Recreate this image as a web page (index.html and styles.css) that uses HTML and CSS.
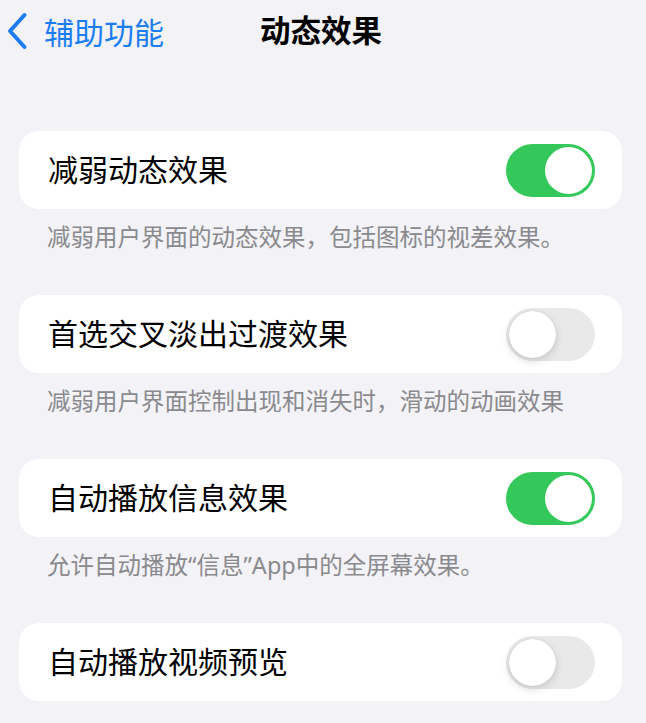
FILE: index.html
```html
<!DOCTYPE html>
<html lang="zh-CN">
<head>
<meta charset="utf-8">
<title>动态效果</title>
<link rel="stylesheet" href="styles.css">
</head>
<body>
  <header class="nav">
    <a class="nav-back" href="#">
      <svg class="chevron" width="22" height="38" viewBox="0 0 22 38" aria-hidden="true">
        <path d="M18.5 3 L4 19 L18.5 35" fill="none" stroke="#1c7cf4" stroke-width="4" stroke-linecap="round" stroke-linejoin="round"/>
      </svg>
      <span>辅助功能</span>
    </a>
    <h1 class="nav-title">动态效果</h1>
  </header>

  <main class="list">
    <section class="group">
      <div class="cell">
        <span class="cell-label">减弱动态效果</span>
        <span class="switch on"><span class="knob"></span></span>
      </div>
      <p class="footer">减弱用户界面的动态效果，包括图标的视差效果。</p>
    </section>

    <section class="group">
      <div class="cell">
        <span class="cell-label">首选交叉淡出过渡效果</span>
        <span class="switch"><span class="knob"></span></span>
      </div>
      <p class="footer">减弱用户界面控制出现和消失时，滑动的动画效果</p>
    </section>

    <section class="group">
      <div class="cell">
        <span class="cell-label">自动播放信息效果</span>
        <span class="switch on"><span class="knob"></span></span>
      </div>
      <p class="footer">允许自动播放“信息”App中的全屏幕效果。</p>
    </section>

    <section class="group">
      <div class="cell">
        <span class="cell-label">自动播放视频预览</span>
        <span class="switch"><span class="knob"></span></span>
      </div>
    </section>
  </main>
</body>
</html>
```

FILE: styles.css
```css
* {
  box-sizing: border-box;
}

html, body {
  margin: 0;
  padding: 0;
}

body {
  background: #f2f2f7;
  font-family: "Noto Sans", "Noto Sans CJK SC", sans-serif;
  color: #000;
  width: 646px;
  height: 723px;
  overflow: hidden;
}

/* navigation bar */
.nav {
  position: relative;
  height: 61px;
  display: flex;
  align-items: center;
  justify-content: center;
  padding-right: 4px;
}

.nav-back {
  position: absolute;
  left: 6px;
  top: 0;
  height: 61px;
  display: flex;
  align-items: center;
  gap: 16px;
  color: #1c7cf4;
  text-decoration: none;
  font-size: 30px;
}

.chevron {
  display: block;
}

.nav-title {
  margin: 0;
  font-size: 30.5px;
  font-weight: 700;
  line-height: 1;
}

/* grouped list */
.list {
  padding-top: 70px;
}

.group {
  margin: 0 24px 0 19px;
}

.cell {
  height: 78px;
  background: #fff;
  border-radius: 20px;
  display: flex;
  align-items: center;
  justify-content: space-between;
  padding: 0 27px 0 29px;
}

.cell-label {
  font-size: 30px;
  line-height: 1;
}

.footer {
  margin: 0;
  height: 86px;
  padding: 13px 20px 0 28px;
  font-size: 23.5px;
  line-height: 30px;
  color: #8a8a8e;
  white-space: nowrap;
}

/* toggle switch */
.switch {
  position: relative;
  width: 89px;
  height: 53px;
  border-radius: 27px;
  background: #e9e9ea;
  flex: none;
}

.switch.on {
  background: #34c759;
}

.switch .knob {
  position: absolute;
  top: 3px;
  left: 3px;
  width: 47px;
  height: 47px;
  border-radius: 50%;
  background: #fff;
  box-shadow: 0 3px 8px rgba(0, 0, 0, 0.15), 0 0 1px rgba(0, 0, 0, 0.2);
}

.switch.on .knob {
  left: 39px;
  box-shadow: none;
}
```
